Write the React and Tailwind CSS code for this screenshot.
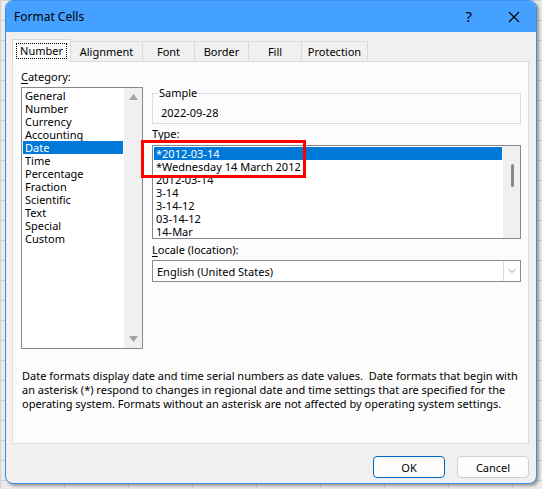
import { ChevronDown } from "lucide-react";

const categories = [
  "General",
  "Number",
  "Currency",
  "Accounting",
  "Date",
  "Time",
  "Percentage",
  "Fraction",
  "Scientific",
  "Text",
  "Special",
  "Custom",
];

const types = [
  "*2012-03-14",
  "*Wednesday 14 March 2012",
  "2012-03-14",
  "3-14",
  "3-14-12",
  "03-14-12",
  "14-Mar",
];

const tabs = ["Number", "Alignment", "Font", "Border", "Fill", "Protection"];
const tabWidths = ["w-[59px]", "w-[72px]", "w-[52px]", "w-[54px]", "w-[53px]", "w-[66px]"];

export default function App() {
  return (
    <div
      className="w-[542px] h-[489px] overflow-hidden bg-[#ebebeb] bg-[linear-gradient(#d2d2d2_1px,transparent_1px),linear-gradient(90deg,#d2d2d2_1px,transparent_1px)] bg-[size:64px_20px] text-[11px] text-black"
      style={{ fontFamily: '"Noto Sans", "Open Sans", sans-serif' }}
    >
      {/* --- Dialog window --- */}
      <div className="ml-[5px] w-[532px] h-[484px] flex flex-col bg-[#f0f0f0] border border-[#3d8fe6] rounded-lg overflow-hidden shadow-[2px_2px_3px_rgba(0,0,0,0.35)]">
        {/* Title bar */}
        <div className="h-[31px] shrink-0 flex items-center bg-[#44a1ff] pl-[8px]">
          <span className="leading-none text-[12px]">Format Cells</span>
          <span className="ml-auto text-[15px] leading-none mr-[36px]">?</span>
          <svg width="12" height="12" viewBox="0 0 12 12" className="mr-[16px]">
            <path d="M1 1 L11 11 M11 1 L1 11" stroke="#000" strokeWidth="1.1" />
          </svg>
        </div>

        <div className="flex flex-col pl-[6px] pr-[7px]">
          {/* Tabs */}
          <div className="flex items-end h-[29px] pt-[6px]">
            {tabs.map((t, i) =>
              i === 0 ? (
                <div
                  key={t}
                  className={`${tabWidths[i]} h-[23px] -mb-px z-10 bg-[#fcfcfc] border border-b-0 border-[#d9d9d9] flex items-center justify-center`}
                >
                  <span className="border border-dotted border-black px-[3px] h-[16px] leading-[14px]">{t}</span>
                </div>
              ) : (
                <div
                  key={t}
                  className={`${tabWidths[i]} h-[20px] border border-l-0 border-b-0 border-[#dadada] flex items-center justify-center pt-[2px]`}
                >
                  {t}
                </div>
              )
            )}
          </div>

          {/* Panel */}
          <div className="h-[383px] bg-[#fcfcfc] border border-[#dcdcdc] flex flex-col pl-[8px] pr-[6px]">
            <div className="flex gap-[9px] pt-[6px]">
              {/* Category column */}
              <div className="w-[122px] flex flex-col">
                <div className="h-[18px] leading-[18px]">
                  <span className="underline underline-offset-2">C</span>ategory:
                </div>
                <div className="mt-px h-[262px] border border-[#828790] bg-white flex">
                  <div className="flex-1 flex flex-col p-px">
                    {categories.map((c) => (
                      <div
                        key={c}
                        className={`h-[13px] leading-[13px] px-[2px] ${c === "Date" ? "bg-[#0078d7] text-white" : ""}`}
                      >
                        {c}
                      </div>
                    ))}
                  </div>
                  <div className="w-[18px] bg-[#f0f0f0] flex flex-col items-center justify-between py-[6px]">
                    <svg width="9" height="6" viewBox="0 0 9 6">
                      <path d="M0 6 L4.5 0 L9 6 Z" fill="#a3a3a3" />
                    </svg>
                    <svg width="9" height="6" viewBox="0 0 9 6">
                      <path d="M0 0 L9 0 L4.5 6 Z" fill="#a3a3a3" />
                    </svg>
                  </div>
                </div>
              </div>

              {/* Right column */}
              <div className="w-[369px] flex flex-col relative">
                <fieldset className="mt-[17px] h-[39px] border border-[#dcdcdc] pl-[8px]">
                  <legend className="ml-[-3px] px-[1px] leading-[16px]">Sample</legend>
                  <div className="leading-[16px] mt-[4px]">2022-09-28</div>
                </fieldset>

                <div className="mt-[2px] h-[16px] leading-[16px]">
                  <span className="underline underline-offset-2">T</span>ype:
                </div>

                <div className="mt-[3px] h-[94px] border border-[#828790] bg-white flex">
                  <div className="flex-1 flex flex-col p-px">
                    {types.map((t, i) =>
                      <div
                        key={t}
                        className={`h-[13px] leading-[13px] px-[2px] ${i === 0 ? "bg-[#0078d7] text-white" : ""}`}
                      >
                        {t}
                      </div>
                    )}
                  </div>
                  <div className="w-[17px] bg-[#f0f0f0] flex justify-center pt-[18px] pl-px">
                    <div className="w-[3px] h-[23px] rounded-full bg-[#8a8a8a]" />
                  </div>
                </div>

                {/* highlight marker */}
                <div className="absolute left-[-11px] top-[72px] w-[165px] h-[38px] border-[3px] border-[#ff0000]" />

                <div className="mt-[3px] h-[16px] leading-[16px]">
                  <span className="underline underline-offset-2">L</span>ocale (location):
                </div>

                <div className="mt-[2px] h-[22px] border border-[#8c8c8c] bg-white flex items-center pl-[4px]">
                  <span className="leading-none">English (United States)</span>
                  <div className="ml-auto h-full w-[17px] border-l border-[#d8d8d8] flex items-center justify-center">
                    <ChevronDown size={12} strokeWidth={1.2} color="#555" />
                  </div>
                </div>
              </div>
            </div>

            <p className="mt-[20px] leading-[14px] pl-px">
              Date formats display date and time serial numbers as date values.&nbsp; Date formats that begin with
              an asterisk (*) respond to changes in regional date and time settings that are specified for the
              operating system. Formats without an asterisk are not affected by operating system settings.
            </p>
          </div>

          {/* Buttons */}
          <div className="flex justify-end gap-[12px] mt-[12px]">
            <button className="w-[72px] h-[22px] rounded-[4px] border border-[#0067c0] bg-[#fdfdfd] leading-none">
              OK
            </button>
            <button className="w-[72px] h-[22px] rounded-[4px] border border-[#d0d0d0] bg-[#fdfdfd] leading-none">
              Cancel
            </button>
          </div>
        </div>
      </div>
    </div>
  );
}
